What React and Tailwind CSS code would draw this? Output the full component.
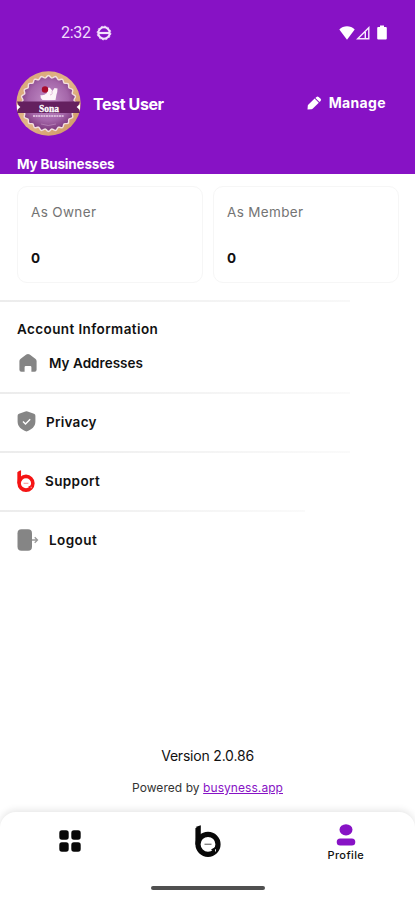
import React from "react";

const scallop = Array.from({ length: 144 }, (_, i) => {
  const a = (i / 144) * Math.PI * 2;
  const r = 26.8 + Math.cos(a * 24) * 1.1;
  return `${(32.5 + Math.cos(a) * r).toFixed(2)},${(32.5 + Math.sin(a) * r).toFixed(2)}`;
}).join(" ");

function Avatar() {
  return (
    <svg className="h-[65px] w-[65px] shrink-0" viewBox="0 0 65 65">
      <defs>
        <radialGradient id="plum" cx="50%" cy="45%" r="55%">
          <stop offset="0" stopColor="#c490c8" />
          <stop offset="0.65" stopColor="#a466a9" />
          <stop offset="1" stopColor="#793579" />
        </radialGradient>
        <linearGradient id="crust" x1="0" y1="0" x2="1" y2="1">
          <stop offset="0" stopColor="#d7a578" />
          <stop offset="0.5" stopColor="#e2b586" />
          <stop offset="1" stopColor="#cc9560" />
        </linearGradient>
      </defs>
      <circle cx="32.5" cy="32.5" r="32.2" fill="url(#crust)" />
      <polygon points={scallop} fill="url(#plum)" stroke="#f2dfe0" strokeWidth="1.4" />
      <path d="M31 18q2-3 4 0l1.500 2 2-3 3 .5q0 4-1 6l-1 5.500H26.500q-2.500-2-2-5 3 1 6.500-2z" fill="#fdf4f8" />
      <path d="M36 20c0 3 1 3-2 4" fill="none" stroke="#d9aace" strokeWidth="0.8" />
      <circle cx="29" cy="18.5" r="3.2" fill="#a80c2c" />
      <path d="M1 30.5h63l-2 5 2 6.5H1l2-6.5z" fill="#64205f" />
      <path d="M1 33.2l3.4 2.8L1 39zM64 33.2L60.600 36l3.400 3z" fill="#fff" />
      <path d="M17 45h31" stroke="#e9d1e9" strokeWidth="1.600" strokeDasharray="2 0.600" />
      <path d="M25 53q7 3 15 0" fill="none" stroke="#bd8bbd" strokeWidth="0.700" />
      <text x="33" y="40.500" textAnchor="middle" fontSize="11" fontWeight="700" fill="#fff" stroke="#fff" strokeWidth="0.300" fontFamily="'Liberation Serif', serif" textLength="20" lengthAdjust="spacingAndGlyphs">Sona</text>
    </svg>
  );
}

function StatusBar() {
  return (
    <div className="flex h-[66px] items-center pl-[61px] pr-[28px] text-white">
      <span className="w-[29px] whitespace-nowrap font-[Roboto,sans-serif] text-[16px] leading-[20px] tracking-[-0.3px] text-[#f1dcfc]">2:32</span>
      <svg className="ml-[6px] h-4 w-4" viewBox="0 0 16 16" fill="none" stroke="#f3e2fc">
        <circle cx="8" cy="8" r="5.700" strokeWidth="2" />
        <circle cx="8" cy="8" r="6.800" strokeWidth="1" strokeDasharray="2 1.560" />
        <path d="M3 8h10" strokeWidth="2.200" />
      </svg>
      <div className="ml-auto flex items-center pb-px">
        <svg className="h-[14px] w-4" viewBox="0 0 16 14" fill="#fff"><path d="M.3 3.500C4.500-.8 11.500-.8 15.700 3.500L8 13.800z" /></svg>
        <svg className="ml-[1px] h-[14px] w-[14px]" viewBox="0 0 14 14" fill="none" stroke="#f7eafd" strokeWidth="1.400"><path d="M1.700 12.800L12.800 1.700V12.800zM9.300 6V13" /></svg>
        <svg className="ml-[7px] h-[15px] w-[10px]" viewBox="0 0 10 15" fill="#fff"><path d="M3 .5h4v1.500h1.800q1 0 1 1v10.500q0 1-1 1H1.200q-1 0-1-1V3q0-1 1-1H3z" /></svg>
      </div>
    </div>
  );
}

function Pencil() {
  return (
    <svg className="h-[14px] w-[15px]" viewBox="0 0 15 14" fill="#fff">
      <path d="M.5 13.500l.3-3.900q.1-.7.700-1.200L7.600 2.600l4.200 4.200-5.900 5.700q-.6.600-1.400.7z" />
      <path d="M8.400 1.900L9.500.9q1.100-.9 2.100 0l2 1.900q1 1 0 2.100L12.500 6z" />
    </svg>
  );
}

function HouseIcon() {
  return (
    <svg className="ml-[2px] h-[18px] w-[18px]" viewBox="0 0 18 18" fill="#858585">
      <path d="M7.300.6q1.700-1.200 3.400 0l5.600 4.100q1.200.9 1.300 2.300v8.800q0 2-2 2h-3.200v-4.500q0-1.200-1.200-1.200H6.800q-1.200 0-1.200 1.200v4.500H2.400q-2 0-2-2V7Q.5 5.600 1.700 4.700z" />
    </svg>
  );
}

function ShieldIcon() {
  return (
    <svg className="h-[21px] w-[19px]" viewBox="0 0 19 21">
      <path d="M8.400.5q1.100-.5 2.200 0l6.400 2.300q1.400.6 1.400 2v5.700c0 5-3.500 8-8.900 10C4.100 18.500.6 15.500.6 10.500V4.800q0-1.400 1.400-2z" fill="#858585" />
      <path d="M6 10.400l2.500 2.500 4.700-4.600" fill="none" stroke="#fff" strokeWidth="1.400" />
    </svg>
  );
}

function BusynessIcon({ className }) {
  return (
    <svg className={className} viewBox="0 0 26 32" fill="none" stroke="currentColor">
      <path d="M.4 20V3.200Q2.500 1 5.800.3V13z" fill="currentColor" stroke="none" />
      <circle cx="13" cy="19.300" r="10" strokeWidth="5.200" />
      <path d="M16 24.500l4.500 2.500v-5z" fill="currentColor" stroke="none" />
      <path d="M20.500 24.300v2.200" stroke="#fff" strokeWidth="0.900" />
      <path d="M9.500 19.300h7" strokeWidth="1.400" opacity="0.500" />
    </svg>
  );
}

function LogoutIcon() {
  return (
    <svg className="h-[22px] w-[22px]" viewBox="0 0 22 22">
      <rect x=".5" y=".3" width="14.500" height="21.400" rx="4" fill="#858585" />
      <path d="M15 11h5.500M17.700 8.200l2.800 2.800-2.800 2.800" fill="none" stroke="#999" strokeWidth="1.300" />
    </svg>
  );
}

function StatCard({ label }) {
  return (
    <div className="h-[97px] flex-1 rounded-[10px] border border-[#f6f6f6] bg-white px-[13px] pt-[15px]">
      <div className="text-[13.5px] leading-5 tracking-[0.35px] text-[#747474]">{label}</div>
      <div className="mt-[26px] text-[13.5px] font-bold leading-5">0</div>
    </div>
  );
}

function Divider({ className }) {
  return <div className={`h-[2px] shrink-0 bg-linear-to-r from-[#ececec] ${className}`} />;
}

function Row({ icon, gap, text, tracking }) {
  return (
    <div className="flex h-[57px] items-center pb-[2px] pl-[17px]">
      {icon}
      <span className={`${gap} ${tracking} text-[13.5px] font-semibold leading-5`}>{text}</span>
    </div>
  );
}

export default function App() {
  return (
    <div className="flex h-[900px] w-[415px] flex-col overflow-hidden bg-white font-[Inter,sans-serif] text-[#111]">
      <header className="h-[174px] shrink-0 bg-[#8712c5] text-white">
        <StatusBar />
        <div className="flex h-[75px] items-center pl-4 pr-[29px]">
          <Avatar />
          <span className="ml-[12px] whitespace-nowrap text-[16px] font-bold leading-5 tracking-[-0.4px]">Test User</span>
          <div className="ml-auto flex items-center pb-px">
            <Pencil />
            <span className="ml-[7px] text-[14px] font-bold leading-5 tracking-[0.35px]">Manage</span>
          </div>
        </div>
        <h2 className="pl-[17px] pt-[13px] text-[13.5px] font-bold leading-5 tracking-[-0.18px]">My Businesses</h2>
      </header>

      <section className="flex gap-[10px] pl-[17px] pr-4 pt-3">
        <StatCard label="As Owner" />
        <StatCard label="As Member" />
      </section>

      <Divider className="mt-[17px] w-[350px] to-[#f8f8f8]" />
      <h2 className="h-[26px] pl-[17px] pt-[17px] text-[13.5px] font-semibold leading-5 tracking-[0.4px]">Account Information</h2>
      <div className="mt-[7px]">
        <Row icon={<HouseIcon />} gap="ml-3" text="My Addresses" tracking="tracking-[0.03px]" />
      </div>
      <Divider className="w-[350px] to-[#fafafa]" />
      <Row icon={<ShieldIcon />} gap="ml-[10px]" text="Privacy" tracking="tracking-[0.27px]" />
      <Divider className="w-[350px] to-[#fafafa]" />
      <Row icon={<BusynessIcon className="h-[22px] w-[18px] text-[#f51414]" />} gap="ml-[10px]" text="Support" tracking="tracking-[0.37px]" />
      <Divider className="w-[305px] to-[#fafafa]" />
      <Row icon={<LogoutIcon />} gap="ml-[10px]" text="Logout" tracking="tracking-[0.42px]" />

      <footer className="mt-auto flex flex-col items-center pb-[15px]">
        <p className="text-[14px] leading-5 tracking-[-0.2px]">Version 2.0.86</p>
        <p className="mt-[13px] text-[12px] leading-[18px] tracking-[0.06px] text-[#333]">
          Powered by <a className="text-[#8712c5] underline">busyness.app</a>
        </p>
      </footer>

      <nav className="h-[88px] shrink-0 rounded-t-[16px] bg-white shadow-[0_-2px_7px_rgba(0,0,0,0.1)]">
        <div className="grid h-[74px] grid-cols-3 justify-items-center">
          <svg className="ml-[1px] mt-[18px] h-[22px] w-[22px]" viewBox="0 0 22 22" fill="#080808">
            <rect x=".3" y=".3" width="9.400" height="9.400" rx="2.600" />
            <rect x="12.300" y=".3" width="9.400" height="9.400" rx="2.600" />
            <rect x=".3" y="12.300" width="9.400" height="9.400" rx="2.600" />
            <rect x="12.300" y="12.300" width="9.400" height="9.400" rx="2.600" />
          </svg>
          <BusynessIcon className="ml-[2px] mt-[13px] h-8 w-[26px] text-[#080808]" />
          <div className="flex flex-col items-center pt-3">
            <svg className="h-[22px] w-[20px]" viewBox="0 0 20 22" fill="#8712c5">
              <ellipse cx="10" cy="5.800" rx="6.500" ry="5.600" />
              <rect x=".7" y="14.500" width="18.600" height="7" rx="3.500" />
            </svg>
            <span className="mt-[1px] text-[11px] font-medium leading-4 tracking-[0.4px]">Profile</span>
          </div>
        </div>
        <div className="mx-auto h-[4px] w-[114px] rounded-full bg-[#505050]" />
      </nav>
    </div>
  );
}
